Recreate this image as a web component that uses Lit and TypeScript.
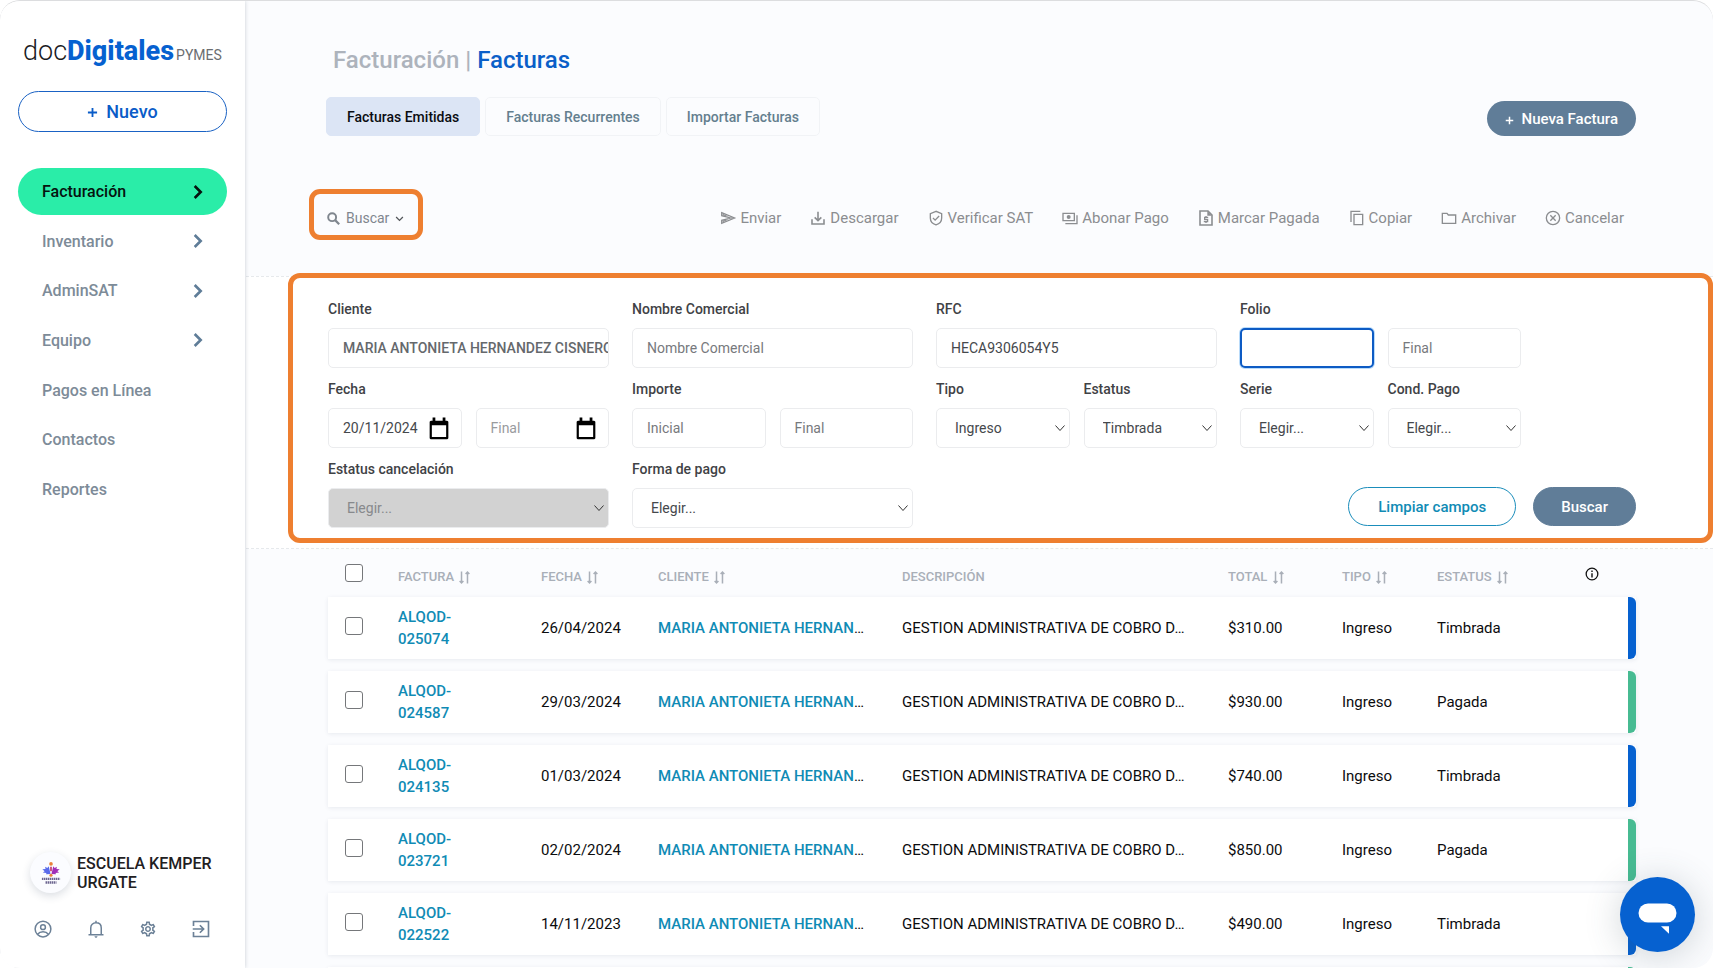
import { LitElement, html, css, svg, nothing } from "lit";
import { customElement, property } from "lit/decorators.js";
import { classMap } from "lit/directives/class-map.js";

/* Icon set on a 24 unit grid. Shapes are stroked unless they carry the "solid" class. */
const ICONS: Record<string, unknown> = {
  plus: svg`<path d="M12 2v20M2 12h20" stroke-width="4"/>`,
  chevronRight: svg`<path d="M7 3l9 9-9 9" stroke-width="4"/>`,
  chevronDown: svg`<path d="M3 8l9 9 9-9" stroke-width="3.4"/>`,
  search: svg`<circle cx="9.5" cy="9.5" r="7.3" stroke-width="3.6"/><path d="M15 15l7.5 7.5" stroke-width="4"/>`,
  send: svg`<path class="solid" d="M4 5.500l9 4.200-9.500-1.500zM4 18.500l9-4.200-9.500 1.500z"/><path d="M2.500 4L22 12 2.500 20v-4.500L16 12 2.500 8.500z" stroke-width="1.800"/>`,
  download: svg`<path d="M3 14v7h18v-7M12 2.500v13M7 11l5 5 5-5" stroke-width="2.400"/>`,
  shield: svg`<path d="M12 2L3.500 5.500V12c0 5 3.500 8.800 8.500 10.300 5-1.500 8.500-5.300 8.500-10.300V5.500zM7.500 12l3.200 3.200 6-6.200" stroke-width="2"/>`,
  payments: svg`<path d="M1.500 5h17v11h-17zM22.500 8v12.500H5" stroke-width="2"/><circle class="solid" cx="10" cy="10.500" r="3"/>`,
  requestPage: svg`<path d="M3 1.500h12L21 7.500V22.500H3z" stroke-width="2.400"/><path class="solid" d="M14 1v7.500h7z"/><path d="M15.300 11H10v3.100h4.400v3.200H8.700M12 9v2M12 17.200v2.300" stroke-width="2"/>`,
  copy: svg`<path d="M7.500 6.500h13v15.500h-13zM3 18V2h14" stroke-width="2"/>`,
  folder: svg`<path d="M2 5h7l2 2.500h11V20H2z" stroke-width="2"/>`,
  cancel: svg`<circle cx="12" cy="12" r="10" stroke-width="2"/><path d="M8 8l8 8M16 8l-8 8" stroke-width="2"/>`,
  account: svg`<circle cx="12" cy="12" r="10.500" stroke-width="2"/><circle cx="12" cy="9.500" r="3.200" stroke-width="2"/><path d="M4.800 19c3.500-4.600 10.900-4.600 14.400 0" stroke-width="2"/>`,
  bell: svg`<path class="solid" d="M12 23.500c1.100 0 2-.9 2-2h-4c0 1.100.9 2 2 2z"/><path d="M2 19.500h20M5 19v-8.500C5 6.500 7.800 3.800 12 3.800s7 2.700 7 6.700V19M12 1v2.500" stroke-width="2"/>`,
  settings: svg`<path class="solid" d="M19.430 12.980c.04-.32.07-.64.07-.98 0-.34-.03-.66-.07-.98l2.110-1.650c.19-.15.24-.42.12-.64l-2-3.460c-.09-.16-.26-.25-.44-.25-.06 0-.12.01-.17.03l-2.490 1c-.52-.4-1.080-.73-1.690-.98l-.38-2.650C14.460 2.180 14.250 2 14 2h-4c-.25 0-.46.18-.49.42l-.38 2.650c-.61.25-1.170.59-1.690.98l-2.490-1c-.06-.02-.12-.03-.18-.03-.17 0-.34.09-.43.25l-2 3.460c-.13.22-.07.49.12.64l2.110 1.650c-.04.32-.07.65-.07.98 0 .33.03.66.07.98l-2.110 1.650c-.19.15-.24.42-.12.64l2 3.460c.09.16.26.25.44.25.06 0 .12-.01.17-.03l2.490-1c.52.4 1.080.73 1.690.98l.38 2.650c.03.24.24.42.49.42h4c.25 0 .46-.18.49-.42l.38-2.650c.61-.25 1.170-.59 1.690-.98l2.490 1c.06.02.12.03.18.03.17 0 .34-.09.43-.25l2-3.460c.12-.22.07-.49-.12-.64l-2.110-1.650zm-1.980-1.710c.04.31.05.52.05.73 0 .21-.02.43-.05.73l-.14 1.130.89.7 1.080.84-.7 1.210-1.270-.51-1.040-.42-.9.68c-.43.32-.84.56-1.250.73l-1.060.43-.16 1.130-.2 1.350h-1.400l-.19-1.350-.16-1.130-1.060-.43c-.43-.18-.83-.41-1.230-.71l-.91-.7-1.060.43-1.270.51-.7-1.210 1.080-.84.89-.7-.14-1.130c-.03-.31-.05-.54-.05-.74s.02-.43.05-.73l.14-1.130-.89-.7-1.080-.84.7-1.210 1.270.51 1.040.42.9-.68c.43-.32.84-.56 1.250-.73l1.060-.43.16-1.130.2-1.350h1.390l.19 1.350.16 1.130 1.060.43c.43.18.83.41 1.230.71l.91.7 1.060-.43 1.270-.51.7 1.210-1.070.85-.89.7.14 1.130zM12 8c-2.210 0-4 1.790-4 4s1.790 4 4 4 4-1.790 4-4-1.790-4-4-4zm0 6c-1.100 0-2-.9-2-2s.9-2 2-2 2 .9 2 2-.9 2-2 2z"/>`,
  exit: svg`<path d="M2 8V2h20v20H2v-6M1 12h14M10.500 7l5 5-5 5" stroke-width="2.200"/>`,
  sort: svg`<path d="M6.500 1v21M3 18.500l3.500 3.500L10 18.500M17.500 23V2M14 5.500L17.500 2 21 5.500" stroke-width="2.800"/>`,
  info: svg`<circle cx="12" cy="12" r="10" stroke-width="2.200"/><path d="M12 10.500V18M12 6v2.400" stroke-width="2.400"/>`,
  calendar: svg`<path d="M3 5.500h18v17.500H3z" stroke-width="2.400" stroke-linejoin="round"/><path class="solid" d="M3 4h18v5H3zM5 .5h3V5H5zM16 .5h3V5h-3z"/>`,
};

@customElement("ui-icon")
export class UiIcon extends LitElement {
  @property() name = "";
  static styles = css`
    :host { display: inline-flex; flex: none; width: 16px; height: 16px; }
    svg { width: 100%; height: 100%; fill: none; stroke: currentColor; overflow: visible; }
    .solid { fill: currentColor; stroke: none; }
  `;
  render() {
    return html`<svg viewBox="0 0 24 24" aria-hidden="true">${ICONS[this.name] ?? nothing}</svg>`;
  }
}

const FONT = css`Roboto, "Liberation Sans", sans-serif`;

@customElement("app-sidebar")
export class AppSidebar extends LitElement {
  private items = [
    { text: "Facturación", active: true, more: true },
    { text: "Inventario", more: true },
    { text: "AdminSAT", more: true },
    { text: "Equipo", more: true },
    { text: "Pagos en Línea" },
    { text: "Contactos" },
    { text: "Reportes" },
  ];

  static styles = css`
    :host {
      display: flex; flex-direction: column; box-sizing: border-box;
      padding: 30px 18px 30px; background: #fff; font-family: ${FONT};
      box-shadow: 0 0 4px rgba(40, 60, 80, 0.24); z-index: 1;
    }
    a { color: inherit; text-decoration: none; }
    .logo { display: flex; align-items: baseline; padding-left: 5px; height: 40px; line-height: 40px; white-space: nowrap; }
    .doc { font-size: 27px; font-weight: 300; color: #1b1b1f; }
    .digitales { font-size: 27px; font-weight: 800; color: #0661d0; }
    .pymes { font-size: 14px; color: #6b6d70; margin-left: 2px; }
    .new {
      display: flex; align-items: center; justify-content: center; gap: 8px;
      height: 41px; margin-top: 20px; border: 1px solid #1a62c4; border-radius: 21px;
      background: #fff; color: #0a5cc8; font: 500 18px ${FONT};
    }
    .new ui-icon { width: 11px; height: 11px; margin-top: 2px; }
    nav { display: flex; flex-direction: column; justify-content: space-between; min-height: 345px; margin-top: 36px; }
    .item {
      display: flex; align-items: center; justify-content: space-between;
      height: 47px; box-sizing: border-box; padding: 0 21px 0 24px; border-radius: 24px;
      font-size: 16px; font-weight: 500; color: #7d8b98;
    }
    .item ui-icon { color: #5f7d98; }
    .active, .active ui-icon { color: #06130f; }
    .active { background: #2aeda8; }
    .user { display: flex; align-items: center; gap: 6px; margin-top: auto; padding-left: 12px; }
    .avatar {
      display: grid; place-items: center; width: 41px; height: 41px; border-radius: 50%;
      background: #fbfcff; box-shadow: 0 3px 9px rgba(30, 50, 80, 0.16);
    }
    .avatar svg { width: 20px; height: 22px; }
    .name { font-size: 16px; line-height: 19px; font-weight: 500; color: #1f2022; }
    .tools { display: flex; justify-content: space-between; padding: 0 17px 0 16px; margin-top: 27px; }
    .tools a { display: flex; color: #6c8197; }
    .tools ui-icon { width: 18px; height: 18px; }
  `;

  render() {
    return html`
      <a class="logo" href="#inicio">
        <span class="doc">doc</span><span class="digitales">Digitales</span><span class="pymes">PYMES</span>
      </a>
      <button class="new" type="button"><ui-icon name="plus"></ui-icon>Nuevo</button>
      <nav>
        ${this.items.map(
          (i) => html`<a class=${classMap({ item: true, active: !!i.active })} href="#">
            ${i.text}${i.more ? html`<ui-icon name="chevronRight"></ui-icon>` : nothing}
          </a>`
        )}
      </nav>
      <div class="user">
        <span class="avatar">
          <svg viewBox="0 0 22 24" aria-hidden="true">
            <circle cx="11" cy="2" r="2" fill="#e8813a" />
            <path d="M10.500 13L8.500 4.500 7 6.500 4.500 5 5 7.500 1.500 8l2.500 2-2 1.500 4 .5-.5 1.500z" fill="#5a6bea" />
            <path d="M11.500 13l2-8.500L15 6.500 17.500 5 17 7.500l3.500.5-2.500 2 2 1.500-4 .5.5 1.500z" fill="#a02fb8" />
            <path d="M10 5h2v5h-2z" fill="#c8457a" />
            <circle cx="11" cy="14.500" r="1.700" fill="#e8813a" />
            <path d="M1 18.500h20" stroke="#6c6590" stroke-width="2.600" stroke-dasharray="1.600 .6" />
            <path d="M5 22.500h12" stroke="#6c6590" stroke-width="2.600" stroke-dasharray="1.600 .6" />
          </svg>
        </span>
        <span class="name">ESCUELA KEMPER<br />URGATE</span>
      </div>
      <div class="tools">
        ${["account", "bell", "settings", "exit"].map((n) => html`<a href="#"><ui-icon name=${n}></ui-icon></a>`)}
      </div>
    `;
  }
}

@customElement("invoice-filters")
export class InvoiceFilters extends LitElement {
  static styles = css`
    :host {
      display: block; position: relative; background: #fff; font-family: ${FONT};
      border-top: 1px dashed #e6e9ec; border-bottom: 1px dashed #e6e9ec;
      padding: 22px 77px 20px 82px;
    }
    .highlight {
      position: absolute; inset: -4px 0 5px 42px; border: 5px solid #ee7f30;
      border-radius: 12px; pointer-events: none;
    }
    .grid {
      display: grid; gap: 11px 23px;
      grid-template-columns: repeat(4, minmax(0, 281fr)) minmax(0, 92fr);
    }
    .pair { display: grid; grid-template-columns: 1fr 1fr; gap: 11px 14px; align-items: end; }
    .field { display: grid; gap: 9px; min-width: 0; }
    label { font-size: 14px; line-height: 20px; font-weight: 500; color: #3f4246; white-space: nowrap; }
    input, select {
      width: 100%; height: 40px; box-sizing: border-box; border: 1px solid #ebecee; border-radius: 5px;
      background: #fff; font: 400 14px ${FONT}; color: #45484c; outline: none;
    }
    input { padding: 0 0 0 14px; }
    input::placeholder { color: #77797d; }
    .strong { font-weight: 500; color: #65686c; }
    .focused { border: 2px solid #0d5bc4; box-shadow: 0 0 0 1px #b9dbfa; }
    select {
      appearance: none; padding: 0 20px 0 18px;
      background: #fff url("data:image/svg+xml,%3Csvg xmlns='http://www.w3.org/2000/svg' width='10' height='6'%3E%3Cpath d='M.5.5L5 5.500 9.500.5' fill='none' stroke='%23333'/%3E%3C/svg%3E") no-repeat right 4px center;
    }
    select:disabled { background-color: #d2d2d2; color: #87898c; opacity: 1; }
    .date { position: relative; }
    .date ui-icon { position: absolute; right: 12px; top: 9px; width: 22px; height: 22px; color: #000; pointer-events: none; }
    .light::placeholder { color: #999b9e; }
    .buttons { grid-column: 3 / 6; display: flex; justify-content: flex-end; align-items: flex-end; gap: 17px; padding-bottom: 2px; }
    button { height: 39px; border-radius: 20px; font: 500 15px ${FONT}; border: 1px solid #1a8dbb; background: #fff; color: #108bb5; padding: 0 29px; }
    .primary { background: #607d98; border-color: #607d98; color: #fff; padding: 0 27px; }
  `;

  private select(id: string, label: string, value: string, disabled = false) {
    return html`<div class="field">
      <label for=${id}>${label}</label>
      <select id=${id} ?disabled=${disabled}><option>${value}</option></select>
    </div>`;
  }

  render() {
    return html`
      <div class="grid">
        <div class="field">
          <label for="cliente">Cliente</label>
          <input id="cliente" class="strong" value="MARIA ANTONIETA HERNANDEZ CISNEROS" />
        </div>
        <div class="field">
          <label for="nombre">Nombre Comercial</label>
          <input id="nombre" placeholder="Nombre Comercial" />
        </div>
        <div class="field">
          <label for="rfc">RFC</label>
          <input id="rfc" value="HECA9306054Y5" />
        </div>
        <div class="pair">
          <div class="field"><label for="folio">Folio</label><input id="folio" class="focused" /></div>
          <input placeholder="Final" aria-label="Folio" />
        </div>
        <span></span>

        <div class="pair">
          <div class="field">
            <label for="fecha">Fecha</label>
            <div class="date"><input id="fecha" value="20/11/2024" /><ui-icon name="calendar"></ui-icon></div>
          </div>
          <div class="date"><input class="light" placeholder="Final" aria-label="Fecha" /><ui-icon name="calendar"></ui-icon></div>
        </div>
        <div class="pair">
          <div class="field"><label for="importe">Importe</label><input id="importe" placeholder="Inicial" /></div>
          <input placeholder="Final" aria-label="Importe" />
        </div>
        <div class="pair">${this.select("tipo", "Tipo", "Ingreso")}${this.select("estatus", "Estatus", "Timbrada")}</div>
        <div class="pair">${this.select("serie", "Serie", "Elegir...")}${this.select("cond", "Cond. Pago", "Elegir...")}</div>
        <span></span>

        ${this.select("cancelacion", "Estatus cancelación", "Elegir...", true)}
        ${this.select("forma", "Forma de pago", "Elegir...")}
        <div class="buttons">
          <button type="button">Limpiar campos</button>
          <button type="button" class="primary">Buscar</button>
        </div>
      </div>
      <div class="highlight"></div>
    `;
  }
}

@customElement("invoice-table")
export class InvoiceTable extends LitElement {
  private rows = [
    ["025074", "26/04/2024", "$310.00", "Timbrada"],
    ["024587", "29/03/2024", "$930.00", "Pagada"],
    ["024135", "01/03/2024", "$740.00", "Timbrada"],
    ["023721", "02/02/2024", "$850.00", "Pagada"],
    ["022522", "14/11/2023", "$490.00", "Timbrada"],
    ["", "", "", "Pagada"],
  ];
  private cols = [
    ["FACTURA", true], ["FECHA", true], ["CLIENTE", true], ["DESCRIPCIÓN", false],
    ["TOTAL", true], ["TIPO", true], ["ESTATUS", true],
  ] as [string, boolean][];

  static styles = css`
    :host { display: block; padding: 1px 77px 0 82px; font-family: ${FONT}; }
    table { width: 100%; table-layout: fixed; border-collapse: separate; border-spacing: 0 12px; }
    .c-check { width: 70px; } .c-factura { width: 143px; } .c-fecha { width: 117px; }
    .c-cliente { width: 244px; } .c-desc { width: 326px; } .c-total { width: 114px; }
    .c-tipo { width: 95px; } .c-estatus { width: 148px; } .c-info { width: 51px; }
    th, td { padding: 0; text-align: left; white-space: nowrap; }
    th { height: 23px; vertical-align: bottom; font-size: 13px; line-height: 16px; font-weight: 500; color: #a9afb8; }
    th ui-icon { width: 13px; height: 13px; margin-left: 1px; vertical-align: -3px; }
    .check { padding-left: 17px; vertical-align: top; }
    th.info { vertical-align: top; }
    th.info ui-icon { width: 14px; height: 14px; margin: 5px 0 0; vertical-align: top; color: #111; }
    input {
      appearance: none; display: block; box-sizing: border-box; width: 18px; height: 18px; margin: 2px 0 0;
      border: 1px solid #75777a; border-radius: 3px; background: #fff;
    }
    td { height: 62px; background: #fff; font-size: 15px; line-height: 22px; color: #0b0c0e; }
    td.check input { margin-top: 20px; }
    td.factura { padding-right: 60px; white-space: normal; }
    tbody tr { box-shadow: 0 1px 4px rgba(60, 80, 110, 0.1); }
    td:last-child { border-right: 8px solid #0661d0; border-radius: 0 6px 6px 0; }
    .paid td:last-child { border-color: #47bb92; }
    a { color: #108bb5; font-weight: 500; text-decoration: none; }
  `;

  render() {
    return html`<table>
      <colgroup>
        ${["check", "factura", "fecha", "cliente", "desc", "total", "tipo", "estatus", "info"].map(
          (c) => html`<col class="c-${c}" />`
        )}
      </colgroup>
      <thead>
        <tr>
          <th class="check"><input type="checkbox" aria-label="Facturas" /></th>
          ${this.cols.map(([t, s]) => html`<th scope="col">${t} ${s ? html`<ui-icon name="sort"></ui-icon>` : nothing}</th>`)}
          <th class="info"><ui-icon name="info"></ui-icon></th>
        </tr>
      </thead>
      <tbody>
        ${this.rows.map(
          ([folio, fecha, total, estatus]) => html`<tr class=${classMap({ paid: estatus === "Pagada" })}>
            <td class="check">${folio ? html`<input type="checkbox" aria-label=${folio} />` : nothing}</td>
            ${folio
              ? html`<td class="factura"><a href="#">ALQOD-${folio}</a></td>
                  <td>${fecha}</td>
                  <td><a href="#">MARIA ANTONIETA HERNAN</a>…</td>
                  <td>GESTION ADMINISTRATIVA DE COBRO D…</td>
                  <td>${total}</td>
                  <td>Ingreso</td>
                  <td>${estatus}</td>`
              : html`<td colspan="7"></td>`}
            <td></td>
          </tr>`
        )}
      </tbody>
    </table>`;
  }
}

@customElement("app-root")
export class AppRoot extends LitElement {
  private actions = [
    ["send", "Enviar"], ["download", "Descargar"], ["shield", "Verificar SAT"], ["payments", "Abonar Pago"],
    ["requestPage", "Marcar Pagada"], ["copy", "Copiar"], ["folder", "Archivar"], ["cancel", "Cancelar"],
  ];

  static styles = css`
    :host { display: block; background: #fff; font-family: ${FONT}; }
    .page {
      position: relative; display: grid; grid-template-columns: 245px minmax(0, 1fr);
      height: 100vh; box-sizing: border-box; overflow: hidden;
      border-top: 1px solid #dcdddf; border-radius: 20px; background: #fbfcfe;
    }
    main { min-width: 0; overflow-y: auto; scrollbar-width: none; padding-left: 1px; }
    header { padding: 45px 77px 0 80px; }
    h1 { margin: 0; padding-left: 7px; font-size: 24px; line-height: 28px; font-weight: 500; color: #adb3bc; }
    h1 span { color: #0a5fc8; }
    .bar { display: flex; justify-content: space-between; align-items: flex-end; margin-top: 23px; }
    .tabs { display: flex; gap: 5px; }
    button { font-family: inherit; margin: 0; }
    .tab {
      height: 39px; padding: 0 20px; border: 1px solid #f1f3f6; border-radius: 5px;
      background: transparent; font-size: 14px; font-weight: 500; color: #647f8e;
    }
    .tab.on { background: #dce5f5; border-color: #dce5f5; color: #0b0d12; }
    .create {
      display: flex; align-items: center; gap: 8px; height: 35px; padding: 0 18px; border: 0;
      border-radius: 18px; background: #607d98; color: #fff; font-size: 15px; font-weight: 500;
    }
    .create ui-icon { width: 9px; height: 9px; margin-top: 3px; }
    .toolbar { display: flex; justify-content: space-between; align-items: center; padding: 70px 89px 46px 81px; }
    .toolbar button { display: flex; align-items: center; height: 24px; padding: 0; border: 0; background: none; white-space: nowrap; }
    .toolbar .search { position: relative; gap: 6px; color: #7f868e; font-size: 14px; }
    .search ui-icon { width: 13px; height: 13px; }
    .search .down { width: 9px; height: 9px; color: #55585c; }
    .ring { position: absolute; inset: -17px -19px -10px -18px; border: 5px solid #ee7f30; border-radius: 11px; }
    .actions { display: flex; gap: 29px; }
    .actions button { gap: 4px; color: #8b8d90; font-size: 15px; }
    .actions ui-icon { width: 16px; height: 16px; }
    .chat {
      position: absolute; right: 18px; bottom: 16px; width: 75px; height: 75px; padding: 0; border: 0;
      border-radius: 50%; background: #0661d0; box-shadow: 0 4px 36px rgba(60, 80, 90, 0.24); z-index: 2;
    }
    .chat svg { display: block; width: 75px; height: 75px; fill: #fff; }
  `;

  render() {
    return html`<div class="page">
      <app-sidebar></app-sidebar>
      <main>
        <header>
          <h1>Facturación | <span>Facturas</span></h1>
          <div class="bar">
            <div class="tabs">
              <button type="button" class="tab on">Facturas Emitidas</button>
              <button type="button" class="tab">Facturas Recurrentes</button>
              <button type="button" class="tab">Importar Facturas</button>
            </div>
            <button type="button" class="create"><ui-icon name="plus"></ui-icon>Nueva Factura</button>
          </div>
        </header>
        <div class="toolbar">
          <button type="button" class="search">
            <ui-icon name="search"></ui-icon>Buscar<ui-icon class="down" name="chevronDown"></ui-icon>
            <span class="ring"></span>
          </button>
          <div class="actions">
            ${this.actions.map(([i, t]) => html`<button type="button"><ui-icon name=${i}></ui-icon>${t}</button>`)}
          </div>
        </div>
        <invoice-filters></invoice-filters>
        <invoice-table></invoice-table>
      </main>
      <button type="button" class="chat" aria-label="Chat">
        <svg viewBox="0 0 75 75" aria-hidden="true">
          <rect x="18.500" y="26.500" width="38" height="19" rx="9.500" />
          <path d="M41 49.300h8v7.500z" />
        </svg>
      </button>
    </div>`;
  }
}
